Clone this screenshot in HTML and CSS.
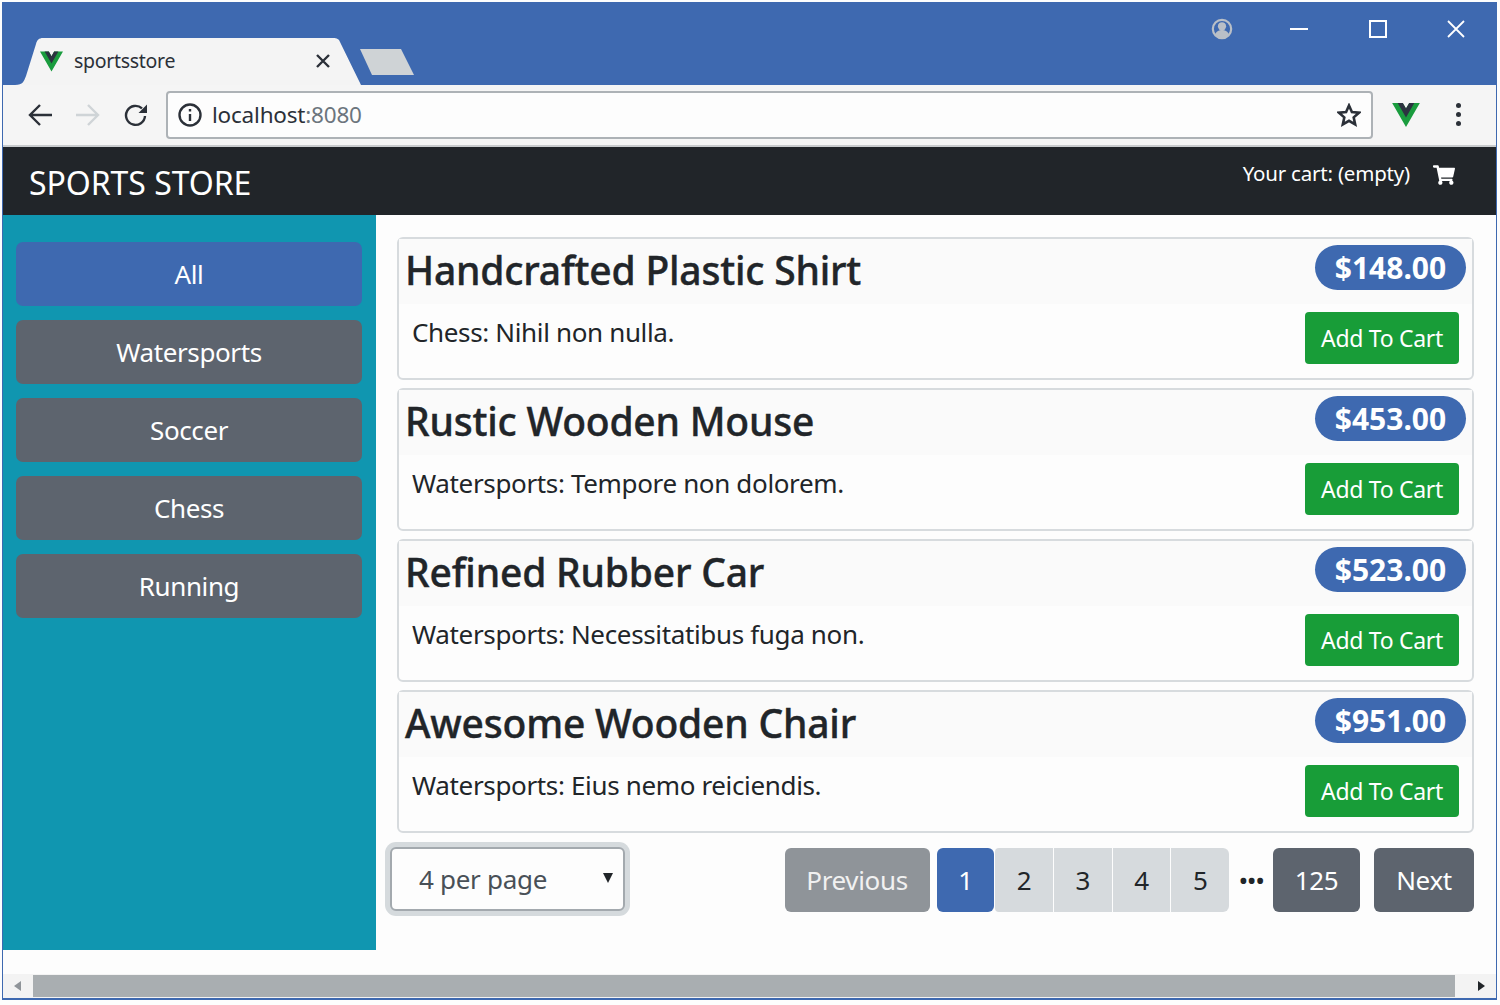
FILE: index.html
```html
<!DOCTYPE html>
<html lang="en">
<head>
<meta charset="utf-8">
<title>sportsstore</title>
<link rel="stylesheet" href="styles.css">
</head>
<body>
<div class="window">
  <header class="tabstrip">
    <div class="tab">
      <svg class="favicon" viewBox="0 0 261.76 226.69"><path class="vue-g" d="M161.096.001l-30.225 52.351L100.647.001H-.005l130.877 226.688L261.749.001z"/><path class="vue-d" d="M161.096.001l-30.225 52.351L100.647.001H52.346l78.526 136.01L209.398.001z"/></svg>
      <span class="tab-title">sportsstore</span>
      <svg class="tab-close" viewBox="0 0 14 14"><path d="M1 1l12 12M13 1L1 13"/></svg>
    </div>
    <div class="newtab"></div>
    <div class="winctl">
      <svg class="profile" viewBox="0 0 24 24"><circle cx="12" cy="12" r="10" class="p-ring"/><circle cx="12" cy="9" r="4.500" class="p-fill"/><path class="p-fill" d="M4.500 18c1.500-4 4.500-5 7.500-5s6 1 7.500 5c-2 2.500-4.500 3.500-7.500 3.500S6.500 20.500 4.500 18z"/></svg>
      <svg class="ctl-min" viewBox="0 0 18 18"><path d="M0 9h18"/></svg>
      <svg class="ctl-max" viewBox="0 0 18 18"><path d="M1 1h16v16H1z"/></svg>
      <svg class="ctl-close" viewBox="0 0 18 18"><path d="M1 1l16 16M17 1L1 17"/></svg>
    </div>
  </header>

  <div class="toolbar">
    <svg class="nav-icon back" viewBox="0 0 24 24"><path d="M24 12H2M12 2L2 12l10 10"/></svg>
    <svg class="nav-icon forward" viewBox="0 0 24 24"><path d="M0 12h22M12 2l10 10-10 10"/></svg>
    <svg class="nav-icon reload" viewBox="0 0 24 24"><path d="M21 13a9.500 9.500 0 1 1-3-7.600"/><path class="solid" d="M23 1.500V10h-8.500z"/></svg>
    <div class="omnibox">
      <svg class="info" viewBox="0 0 24 24"><circle cx="12" cy="12" r="10.500"/><path d="M12 11v7"/><path d="M12 6v2.500"/></svg>
      <span class="url">localhost<span class="url-port">:8080</span></span>
      <svg class="star" viewBox="0 0 24 24"><path d="M12 2.500l2.900 6.500 7.100.7-5.300 4.700 1.500 7-6.200-3.600-6.200 3.600 1.500-7L2 9.700l7.100-.7z"/></svg>
    </div>
    <svg class="ext-vue" viewBox="0 0 261.76 226.69"><path class="vue-g" d="M161.096.001l-30.225 52.351L100.647.001H-.005l130.877 226.688L261.749.001z"/><path class="vue-d" d="M161.096.001l-30.225 52.351L100.647.001H52.346l78.526 136.01L209.398.001z"/></svg>
    <div class="menu-dots"><i></i><i></i><i></i></div>
  </div>

  <nav class="navbar">
    <div class="brand">SPORTS STORE</div>
    <div class="cart">
      <span class="cart-text">Your cart: (empty)</span>
      <svg class="cart-icon" viewBox="0 0 576 512"><path d="M528.12 301.319l47.273-208C578.806 78.301 567.391 64 551.99 64H159.208l-9.166-44.81C147.758 8.021 137.93 0 126.529 0H24C10.745 0 0 10.745 0 24v16c0 13.255 10.745 24 24 24h69.883l70.248 343.435C147.325 417.1 136 435.222 136 456c0 30.928 25.072 56 56 56s56-25.072 56-56c0-15.674-6.447-29.835-16.824-40h209.647C430.447 426.165 424 440.326 424 456c0 30.928 25.072 56 56 56s56-25.072 56-56c0-22.172-12.888-41.332-31.579-50.405l5.517-24.276c3.413-15.018-8.002-29.319-23.403-29.319H218.117l-6.545-32h293.145c11.206 0 20.92-7.754 23.403-18.681z"/></svg>
    </div>
  </nav>

  <div class="content">
    <aside class="sidebar">
      <button class="cat active">All</button>
      <button class="cat">Watersports</button>
      <button class="cat">Soccer</button>
      <button class="cat">Chess</button>
      <button class="cat">Running</button>
    </aside>
    <main class="main">
      <article class="card">
        <div class="card-head"><h4 class="title">Handcrafted Plastic Shirt</h4><span class="price">$148.00</span></div>
        <div class="card-body"><p class="desc">Chess: Nihil non nulla.</p><button class="add">Add To Cart</button></div>
      </article>
      <article class="card">
        <div class="card-head"><h4 class="title">Rustic Wooden Mouse</h4><span class="price">$453.00</span></div>
        <div class="card-body"><p class="desc">Watersports: Tempore non dolorem.</p><button class="add">Add To Cart</button></div>
      </article>
      <article class="card">
        <div class="card-head"><h4 class="title">Refined Rubber Car</h4><span class="price">$523.00</span></div>
        <div class="card-body"><p class="desc">Watersports: Necessitatibus fuga non.</p><button class="add">Add To Cart</button></div>
      </article>
      <article class="card">
        <div class="card-head"><h4 class="title">Awesome Wooden Chair</h4><span class="price">$951.00</span></div>
        <div class="card-body"><p class="desc">Watersports: Eius nemo reiciendis.</p><button class="add">Add To Cart</button></div>
      </article>
      <div class="pager-row">
        <label class="select-wrap"><select class="per-page"><option>4 per page</option><option>8 per page</option></select></label>
        <div class="pager">
          <button class="pg pg-disabled">Previous</button>
          <div class="pg-group">
            <button class="pg pg-num pg-current">1</button>
            <button class="pg pg-num">2</button>
            <button class="pg pg-num">3</button>
            <button class="pg pg-num">4</button>
            <button class="pg pg-num">5</button>
          </div>
          <span class="pg-dots">•••</span>
          <button class="pg pg-dark pg-last">125</button>
          <button class="pg pg-dark pg-next">Next</button>
        </div>
      </div>
    </main>
  </div>

  <div class="scrollbar">
    <span class="sb-arrow sb-left"></span>
    <div class="sb-thumb"></div>
    <span class="sb-arrow sb-right"></span>
  </div>
</div>
</body>
</html>
```
FILE: styles.css
```css
* { box-sizing: border-box; }
html, body { margin: 0; padding: 0; }
body {
  width: 1500px;
  height: 1005px;
  overflow: hidden;
  background: #fdfdfd;
  font-family: "Noto Sans", "Open Sans", sans-serif;
  color: #212529;
}
button, select { font-family: inherit; }

.window {
  margin: 2px 3px 0 2px;
  height: 998px;
  border-left: 1px solid #3e69b0;
  border-right: 1px solid #3e69b0;
  border-bottom: 2px solid #3e69b0;
  display: flex;
  flex-direction: column;
  background: #fdfdfd;
}

/* Browser chrome */
.tabstrip {
  height: 83px;
  flex: none;
  background: #3e69b0;
  display: flex;
  align-items: flex-end;
  padding-left: 12px;
}
.tab {
  width: 346px;
  height: 47px;
  background: #f4f4f4;
  clip-path: path("M0 47 C8 47 9 43 11 38 L21 6 C22 2 24 0 28 0 L318 0 C322 0 324 1 325 4 L346 47 Z");
  display: flex;
  align-items: center;
  padding: 0 0 0 25px;
  flex: none;
}
.favicon { width: 23px; height: 21px; flex: none; margin-top: -1px; }
.tab-title { margin-left: 11px; font-size: 19.500px; color: #2b3038; width: 242px; margin-top: -2px; letter-spacing: -0.3px; }
.tab-close { width: 14px; height: 14px; fill: none; stroke: #2b3038; stroke-width: 2.400; margin-top: -2px; }
.newtab {
  width: 56px;
  height: 26px;
  margin: 0 0 10px -1px;
  background: #cfd3d6;
  clip-path: polygon(0 0, 41px 0, 54px 26px, 12px 26px);
  flex: none;
}
.vue-g { fill: #1a9c3e; }
.vue-d { fill: #2c3340; }

.winctl {
  margin-left: auto;
  align-self: flex-start;
  display: flex;
  align-items: center;
  height: 54px;
  padding-right: 31px;
}
.profile { width: 22px; height: 22px; margin-right: 57px; }
.p-ring { fill: none; stroke: #b9bfc7; stroke-width: 2.400; }
.p-fill { fill: #b9bfc7; }
.ctl-min, .ctl-max, .ctl-close { width: 18px; height: 18px; fill: none; stroke: #fff; }
.ctl-min { stroke-width: 2; margin-right: 61px; }
.ctl-max { stroke-width: 2; margin-right: 60px; }
.ctl-close { stroke-width: 1.800; }

.toolbar {
  height: 62px;
  flex: none;
  background: #f5f5f5;
  border-bottom: 2px solid #c9ccce;
  display: flex;
  align-items: center;
  padding: 0 0 1px 25px;
}
.nav-icon { width: 24px; height: 24px; fill: none; stroke: #2b3038; stroke-width: 2.400; flex: none; }
.back { margin-left: 0; }
.forward { margin-left: 24px; stroke: #cfd4d7; }
.reload { margin-left: 24px; }
.reload .solid { fill: #2b3038; stroke: none; }
.omnibox {
  margin-left: 18px;
  width: 1207px;
  height: 48px;
  background: #fdfdfd;
  border: 2px solid #adb2b6;
  border-radius: 4px;
  display: flex;
  align-items: center;
  padding: 0 10px 0 10px;
  flex: none;
}
.info { width: 24px; height: 24px; fill: none; stroke: #2b3038; stroke-width: 2.400; flex: none; }
.url { margin-left: 10px; font-size: 22.500px; color: #2b3038; letter-spacing: -0.2px; }
.url-port { color: #6c757d; }
.star { margin-left: auto; width: 24px; height: 24px; fill: none; stroke: #2b3038; stroke-width: 2.600; }
.ext-vue { width: 28px; height: 24px; margin-left: 19px; flex: none; }
.menu-dots { margin-left: 36px; display: flex; flex-direction: column; gap: 4px; }
.menu-dots i { display: block; width: 5px; height: 5px; border-radius: 50%; background: #2b3038; }

.navbar {
  height: 68px;
  flex: none;
  background: #212529;
  color: #fff;
  display: flex;
  justify-content: space-between;
  padding: 0 41px 0 26px;
}
.brand { font-size: 32px; line-height: 72px; letter-spacing: -0.05px; font-weight: 400; }
.cart { display: flex; align-items: center; height: 52px; }
.cart-text { font-size: 20.500px; letter-spacing: -0.2px; }
.cart-icon { width: 22px; height: 20px; margin-left: 23px; fill: #fff; margin-top: 3px; }

/* Page */
.content { height: 735px; flex: none; display: flex; }
.sidebar {
  width: 373px;
  flex: none;
  background: #1096b0;
  padding: 27px 14px 0 13px;
  display: flex;
  flex-direction: column;
  gap: 14px;
}
.cat {
  height: 64px;
  flex: none;
  border: 0;
  border-radius: 7px;
  background: #5d646e;
  color: #fff;
  font-size: 26px;
  letter-spacing: -0.4px;
  padding: 0;
}
.cat.active { background: #3e69b0; }

.main { flex: 1; min-width: 0; padding: 22px 22px 0 21px; }
.card {
  height: 143px;
  margin-bottom: 8px;
  border: 2px solid #d7dbde;
  border-radius: 6px;
  background: #fdfdfd;
}
.card-head {
  height: 65px;
  background: #fafafa;
  display: flex;
  justify-content: space-between;
  padding: 6px 6px 0 6px;
}
.title { margin: 0; font-size: 39px; line-height: 50px; font-weight: 500; color: #212529; letter-spacing: -0.2px; -webkit-text-stroke: 0.4px #212529; }
.price {
  height: 45px;
  width: 151px;
  border-radius: 23px;
  background: #3e69b0;
  color: #fff;
  font-size: 30px;
  font-weight: 700;
  line-height: 46px;
  text-align: center;
  letter-spacing: 0;
}
.card-body {
  display: flex;
  justify-content: space-between;
  padding: 8px 13px 0 13px;
}
.desc { margin: 0; font-size: 26px; line-height: 40px; letter-spacing: -0.35px; color: #212529; }
.add {
  width: 154px;
  height: 52px;
  border: 0;
  border-radius: 4px;
  background: #189d38;
  color: #fff;
  font-size: 23px;
  letter-spacing: -0.3px;
  padding: 0;
}

.pager-row { display: flex; margin-top: 15px; }
.select-wrap { position: relative; display: block; margin: -1px 0 0 -7px; }
.select-wrap::after {
  content: "";
  position: absolute;
  right: 12px;
  top: 26px;
  border-style: solid;
  border-width: 10px 5px 0;
  border-color: #212529 transparent transparent;
}
.per-page {
  display: block;
  width: 235px;
  height: 64px;
  appearance: none;
  -webkit-appearance: none;
  background: #fdfdfd;
  border: 2px solid #a3a9ae;
  border-radius: 6px;
  box-shadow: 0 0 0 5px #d5dadd;
  padding: 0 0 0 27px;
  font-size: 26px;
  letter-spacing: -0.3px;
  color: #495057;
  outline: 0;
}
.pager { margin-left: auto; display: flex; align-items: stretch; height: 64px; }
.pg {
  border: 0;
  padding: 0;
  font-size: 26px;
  letter-spacing: -0.35px;
  color: #fff;
  border-radius: 6px;
}
.pg-disabled { width: 145px; background: #8f9499; color: #f1f1f1; }
.pg-group { display: flex; margin-left: 7px; gap: 1px; }
.pg-num { width: 57.700px; background: #d6dadd; color: #212529; border-radius: 0; }
.pg-num:nth-child(1) { border-radius: 6px; background: #3e69b0; color: #fff; }
.pg-num:nth-child(2) { border-radius: 4px 0 0 4px; }
.pg-num:nth-child(5) { border-radius: 0 6px 6px 0; }
.pg-dots { width: 44px; text-align: center; font-size: 26px; line-height: 64px; color: #212529; letter-spacing: -1.500px; }
.pg-dark { background: #5d646e; }
.pg-last { width: 87px; }
.pg-next { width: 100px; margin-left: 14px; }

/* Window scrollbar */
.scrollbar {
  margin-top: auto;
  height: 24px;
  margin-bottom: 0;
  background: #f3f3f3;
  display: flex;
  align-items: stretch;
  padding-top: 1px;
  padding-bottom: 1px;
}
.sb-arrow { width: 30px; flex: none; position: relative; }
.sb-left::before, .sb-right::before {
  content: "";
  position: absolute;
  top: 6px;
  border-style: solid;
  border-width: 5px 0 5px 7px;
  border-color: transparent transparent transparent #212529;
}
.sb-left::before { left: 11px; transform: scaleX(-1); border-left-color: #8f9499; }
.sb-right::before { right: 11px; }
.sb-thumb { flex: 1; background: #a9aeb1; }
.sb-right { width: 41px; }
```
